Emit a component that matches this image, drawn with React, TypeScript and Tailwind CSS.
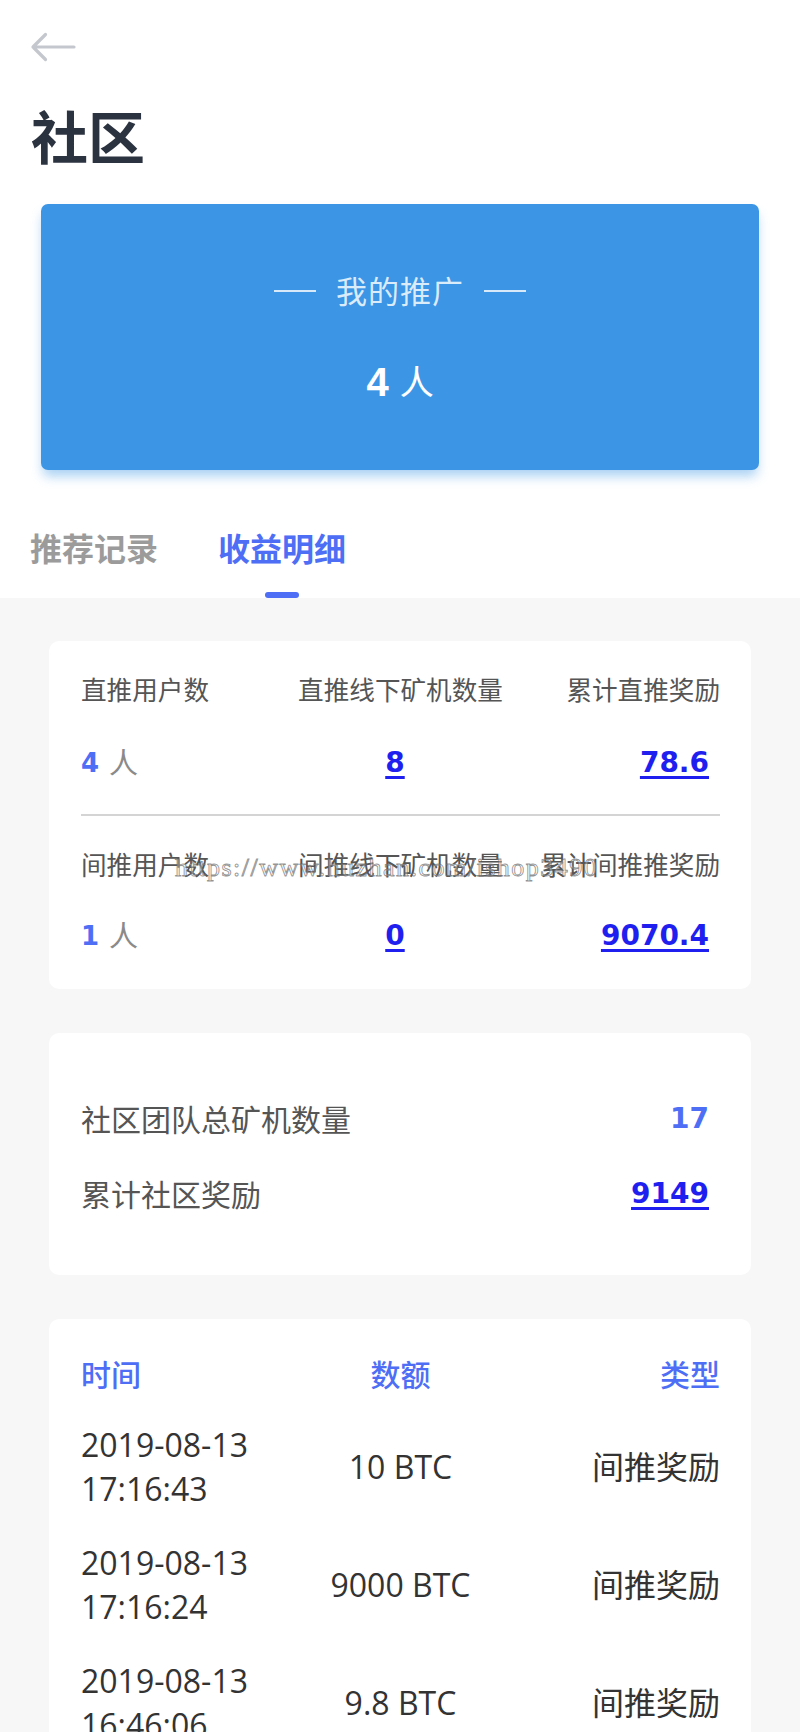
import React from "react";

const ROWS = [
  { date: "2019-08-13", time: "17:16:43", amount: "10 BTC", type: "间推奖励" },
  { date: "2019-08-13", time: "17:16:24", amount: "9000 BTC", type: "间推奖励" },
  { date: "2019-08-13", time: "16:46:06", amount: "9.8 BTC", type: "间推奖励" },
];

function BackArrow() {
  return (
    <svg width="46" height="30" viewBox="0 0 46 30" fill="none" stroke="#c4c7cd" strokeWidth={3.2} strokeLinecap="round" strokeLinejoin="round">
      <path d="M44 15H3M15.5 2.5L3 15l12.5 12.5" />
    </svg>
  );
}

function Count({ n }: { n: string }) {
  return (
    <div className="h-[40px] flex items-center pr-[11px]">
      <span className="font-['DejaVu_Sans',sans-serif] font-bold text-[26px] text-[#4d6ef5]">{n}</span>
      <span className="ml-[10px] text-[29px] text-[#8a8a8a]">人</span>
    </div>
  );
}

function LinkNum({ v, align }: { v: string; align: "center" | "end" }) {
  return (
    <div className={`h-[40px] flex items-center pr-[11px] ${align === "center" ? "justify-center" : "justify-end"}`}>
      <span className="font-['DejaVu_Sans',sans-serif] font-bold text-[28px] text-[#1f1fef] underline decoration-[2.5px] underline-offset-[4px]">{v}</span>
    </div>
  );
}

export default function App() {
  return (
    <div className="min-h-screen bg-[#f7f7f7] font-['Open_Sans','Noto_Sans_CJK_SC',sans-serif]">
      {/* Top */}
      <div className="bg-white">
        <div className="pl-[30px] pt-[32px]">
          <BackArrow />
        </div>
        <h1 className="mt-[47px] pl-[31px] text-[57px] leading-[56px] font-bold text-[#2c3340]">社区</h1>

        {/* Promotion card */}
        <div className="mx-[41px] mt-[39px] h-[266px] rounded-[7px] bg-[#3c96e5] shadow-[0_8px_12px_-2px_rgba(60,150,229,0.45)] flex flex-col items-center">
          <div className="mt-[67px] h-[40px] flex items-center gap-[20px] text-[rgba(255,255,255,0.82)]">
            <span className="w-[42px] h-[2px] bg-[rgba(255,255,255,0.8)]" />
            <span className="text-[31px] leading-[40px] tracking-[1px]">我的推广</span>
            <span className="w-[42px] h-[2px] bg-[rgba(255,255,255,0.8)]" />
          </div>
          <div className="mt-[47px] h-[48px] flex items-center text-white">
            <span className="font-['Liberation_Sans',sans-serif] font-bold text-[40px]">4</span>
            <span className="ml-[11px] text-[34px]">人</span>
          </div>
        </div>

        {/* Tabs */}
        <div className="mt-[59px] pl-[30px] flex gap-[60px]">
          <div className="flex flex-col items-center">
            <span className="h-[40px] leading-[40px] text-[32px] font-bold text-[#9b9b9b]">推荐记录</span>
            <span className="mt-[23px] h-[6px] w-[34px] invisible" />
          </div>
          <div className="flex flex-col items-center">
            <span className="h-[40px] leading-[40px] text-[32px] font-bold text-[#4d6ef5]">收益明细</span>
            <span className="mt-[23px] h-[6px] w-[34px] rounded-full bg-[#4d6ef5]" />
          </div>
        </div>
      </div>

      {/* Content */}
      <div className="px-[49px] pt-[43px] pb-[40px] flex flex-col gap-[44px]">
        {/* Referral stats */}
        <div className="relative rounded-[10px] bg-white pl-[32px] pr-[31px] pt-[32px] pb-[33px]">
          <div className="grid grid-cols-3 text-[25.6px] leading-[36px] text-[#555]">
            <span>直推用户数</span>
            <span className="text-center">直推线下矿机数量</span>
            <span className="text-right">累计直推奖励</span>
          </div>
          <div className="mt-[34px] grid grid-cols-3">
            <Count n="4" />
            <LinkNum v="8" align="center" />
            <LinkNum v="78.6" align="end" />
          </div>
          <div className="mt-[31px] h-[2px] bg-[#d4d4d4]" />
          <div className="mt-[32px] grid grid-cols-3 text-[25.6px] leading-[36px] text-[#555]">
            <span>间推用户数</span>
            <span className="text-center">间推线下矿机数量</span>
            <span className="text-right whitespace-nowrap">累计间推推奖励</span>
          </div>
          <div className="mt-[32px] grid grid-cols-3">
            <Count n="1" />
            <LinkNum v="0" align="center" />
            <LinkNum v="9070.4" align="end" />
          </div>
          {/* watermark */}
          <span className="absolute left-[126px] top-[209px] whitespace-nowrap font-['Liberation_Serif',serif] text-[26px] leading-[36px] tracking-[1.5px] text-[rgba(255,255,255,0.35)] [-webkit-text-stroke:0.9px_rgba(100,100,100,0.7)]">
            https://www.huzhan.com/ishop3490
          </span>
        </div>

        {/* Community */}
        <div className="rounded-[10px] bg-white pl-[32px] pr-[31px] pt-[66px] pb-[61px] flex flex-col gap-[35px]">
          <div className="h-[40px] flex items-center justify-between">
            <span className="text-[30px] text-[#555]">社区团队总矿机数量</span>
            <span className="pr-[11px] font-['DejaVu_Sans',sans-serif] font-bold text-[28px] text-[#4d6ef5]">17</span>
          </div>
          <div className="h-[40px] flex items-center justify-between">
            <span className="text-[30px] text-[#555]">累计社区奖励</span>
            <span className="pr-[11px] font-['DejaVu_Sans',sans-serif] font-bold text-[28px] text-[#1f1fef] underline decoration-[2.5px] underline-offset-[4px]">9149</span>
          </div>
        </div>

        {/* Records */}
        <div className="rounded-[10px] bg-white pl-[32px] pr-[31px] pt-[33px] pb-[40px]">
          <div className="grid grid-cols-3 h-[40px] items-center text-[30px] font-medium text-[#4d6ef5]">
            <span>时间</span>
            <span className="text-center">数额</span>
            <span className="text-right">类型</span>
          </div>
          <div className="mt-[31px] flex flex-col gap-[30px]">
            {ROWS.map((r) => (
              <div key={r.time} className="grid grid-cols-3 items-center text-[32px] leading-[44px] text-[#333]">
                <div className="flex flex-col whitespace-nowrap">
                  <span>{r.date}</span>
                  <span>{r.time}</span>
                </div>
                <span className="text-center whitespace-nowrap">{r.amount}</span>
                <span className="text-right">{r.type}</span>
              </div>
            ))}
          </div>
        </div>
      </div>
    </div>
  );
}
